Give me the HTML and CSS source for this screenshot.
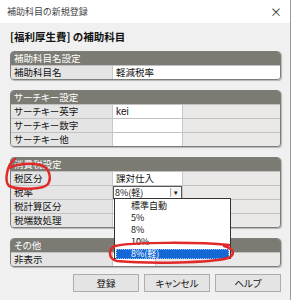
FILE: index.html
```html
<!DOCTYPE html>
<html lang="ja">
<head>
    <meta charset="UTF-8">
    <title>補助科目の新規登録</title>
    <link rel="stylesheet" href="styles.css">
</head>
<body>
    <div class="window">
        <div class="titlebar">
            <span class="title">補助科目の新規登録</span>
            <span class="close">×</span>
        </div>

        <div class="content">
            <h1 class="heading">[福利厚生費] の補助科目</h1>

            <section class="panel">
                <div class="panel-head">補助科目名設定</div>
                <div class="row wide">
                    <div class="label">補助科目名</div>
                    <div class="value">軽減税率</div>
                </div>
            </section>

            <section class="panel">
                <div class="panel-head">サーチキー設定</div>
                <div class="row">
                    <div class="label">サーチキー英字</div>
                    <div class="value latin">kei</div>
                    <div class="rest"></div>
                </div>
                <div class="row">
                    <div class="label">サーチキー数字</div>
                    <div class="value"></div>
                    <div class="rest"></div>
                </div>
                <div class="row">
                    <div class="label">サーチキー他</div>
                    <div class="value"></div>
                    <div class="rest"></div>
                </div>
            </section>

            <section class="panel">
                <div class="panel-head">消費税設定</div>
                <div class="row">
                    <div class="label">税区分</div>
                    <div class="value">課対仕入</div>
                    <div class="rest"></div>
                </div>
                <div class="row">
                    <div class="label">税率</div>
                    <div class="value">
                        <div class="select"><span>8%(軽)</span><span class="arrow">▾</span></div>
                    </div>
                    <div class="rest"></div>
                </div>
                <div class="row">
                    <div class="label">税計算区分</div>
                    <div class="value"></div>
                    <div class="rest"></div>
                </div>
                <div class="row">
                    <div class="label">税端数処理</div>
                    <div class="value"></div>
                    <div class="rest"></div>
                </div>
            </section>

            <section class="panel">
                <div class="panel-head">その他</div>
                <div class="row narrow">
                    <div class="label">非表示</div>
                    <div class="value"></div>
                    <div class="rest"></div>
                </div>
            </section>

            <div class="buttons">
                <button class="btn">登録</button>
                <button class="btn">キャンセル</button>
                <button class="btn">ヘルプ</button>
            </div>
        </div>

        <!-- open list of the 税率 select -->
        <ul class="dropdown">
            <li>標準自動</li>
            <li>5%</li>
            <li>8%</li>
            <li>10%</li>
            <li class="selected">8%(軽)</li>
        </ul>

        <!-- red pen marks drawn over the screenshot -->
        <svg class="marks" width="293" height="300" viewBox="0 0 293 300">
            <path d="M15 159 C7 164 4 181 9 186 C18 190 43 190 48 184 C52 177 49 167 40 165 C30 163 18 164 9 168" />
            <path d="M229 245 C200 242 132 242 115 246 C108 249 108 259 117 261 C150 264 210 263 228 258 C235 255 235 249 224 246" />
        </svg>
    </div>
</body>
</html>
```

FILE: styles.css
```css
body {
    margin: 0;
    padding: 0;
    background: #fff;
    font-family: "Noto Sans CJK JP", "Noto Sans", sans-serif;
    font-feature-settings: "palt";
    color: #111;
}
.window {
    position: relative;
    width: 290px;
    height: 300px;
    border-right: 1px solid #9a9a9a;
    background: #f0f0f0;
    overflow: hidden;
}
.titlebar {
    height: 23px;
    background: #fff;
    display: flex;
    align-items: center;
    justify-content: space-between;
    padding: 0 8px 0 7px;
}
.title {
    font-size: 9px;
    color: #444;
}
.close {
    font-size: 12px;
    color: #333;
}
.content {
    padding: 0 9px 0 10px;
}
.heading {
    margin: 0;
    padding-top: 7px;
    height: 21px;
    font-size: 10.5px;
    font-weight: bold;
    line-height: 14px;
    color: #111;
}
.panel {
    border: 1px solid #7e7e78;
    border-radius: 4px;
    overflow: hidden;
    background: #d9d9d9;
    margin-bottom: 10px;
    box-shadow: 1px 1px 1px rgba(0, 0, 0, 0.25);
}
.panel-head {
    height: 13px;
    line-height: 13px;
    background: #7b7b73;
    color: #fff;
    font-size: 9.5px;
    padding-left: 3px;
}
.row {
    display: grid;
    grid-template-columns: 102px 69px 1fr;
    height: 14px;
    box-sizing: border-box;
    border-top: 1px solid #c2c2c2;
    font-size: 9.5px;
    line-height: 13px;
}
.row.wide {
    grid-template-columns: 102px 1fr;
}
.row.narrow {
    grid-template-columns: 102px 42px 1fr;
}
.label {
    background: #e4e4e4;
    padding-left: 3px;
    border-right: 1px solid #c8c8c8;
}
.value {
    background: #fff;
    padding-left: 3px;
    position: relative;
}
.latin {
    font-family: "Liberation Sans", Arial, sans-serif;
    font-size: 10px;
}
.rest {
    background: #ebe8e8;
    border-left: 1px solid #c8c8c8;
}
.select {
    position: absolute;
    left: 0;
    top: 0;
    right: 0;
    bottom: 0;
    border: 1px solid #555;
    background: #fff;
    display: flex;
    justify-content: space-between;
    align-items: center;
    font-size: 9px;
    padding-left: 1px;
}
.arrow {
    width: 9px;
    height: 9px;
    background: #f4f4f4;
    border-left: 1px solid #aaa;
    font-size: 7px;
    line-height: 9px;
    text-align: center;
    margin-right: 1px;
}
.buttons {
    display: flex;
    justify-content: flex-end;
    gap: 5px;
    margin-top: -3px;
}
.btn {
    width: 66px;
    height: 18px;
    padding: 0;
    border: 1px solid #adadad;
    background: #e4e4e4;
    font-family: inherit;
    font-feature-settings: "palt";
    font-size: 9.5px;
    color: #111;
}
.dropdown {
    position: absolute;
    left: 114px;
    top: 198px;
    width: 117px;
    height: 61px;
    box-sizing: border-box;
    margin: 0;
    padding: 1px;
    list-style: none;
    background: #fff;
    border: 1px solid #333;
    font-size: 9px;
}
.dropdown li {
    height: 12px;
    line-height: 12px;
    padding-left: 15px;
}
.dropdown li.selected {
    background: #1468d6;
    color: #fff;
    outline: 1px dotted #9bc0ff;
    outline-offset: -1px;
    height: 10px;
    line-height: 10px;
    margin-top: 1px;
}
.marks {
    position: absolute;
    left: 0;
    top: 0;
    pointer-events: none;
}
.marks path {
    fill: none;
    stroke: #e02a2a;
    stroke-width: 2.5;
    stroke-linecap: round;
}
```
